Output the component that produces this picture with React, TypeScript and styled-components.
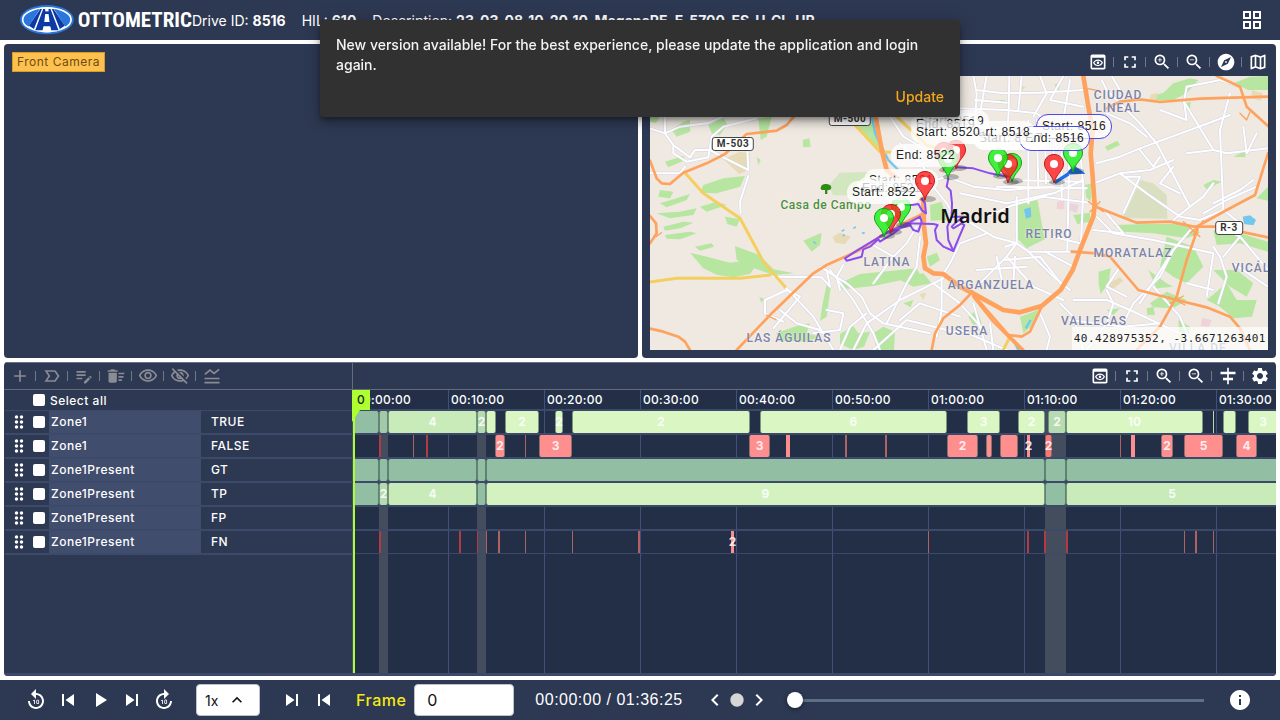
import React from 'react';
import styled, { createGlobalStyle, css } from 'styled-components';
import {
  MdAdd, MdAlignHorizontalCenter, MdCircle, MdDeleteSweep, MdDragIndicator, MdEditNote, MdExpandLess,
  MdExplore, MdForward10, MdFullscreen, MdGridView, MdInfo, MdKeyboardArrowLeft, MdKeyboardArrowRight,
  MdLabelImportantOutline, MdOutlineMap, MdOutlinePreview, MdOutlineVisibility, MdOutlineVisibilityOff,
  MdPlayArrow, MdReplay10, MdSettings, MdSkipNext, MdSkipPrevious, MdZoomIn, MdZoomOut,
} from 'react-icons/md';

const navy = '#2d3852';
const line = '#3d4969';

const GlobalStyle = createGlobalStyle`
  * { box-sizing: border-box; }
  body { margin: 0; background: #fff; color: #fff; font: 400 12px Inter, sans-serif; letter-spacing: 0.5px; }
  button, input, select { font: inherit; letter-spacing: inherit; color: inherit; }
`;

const Page = styled.div`
  display: flex;
  flex-direction: column;
  min-height: 100vh;
`;

const Header = styled.header`
  display: flex;
  align-items: center;
  height: 40px;
  padding: 0 16px 0 20px;
  background: ${navy};
`;

const Brand = styled.a`
  display: flex;
  align-items: center;
  gap: 4px;
  width: 172px;
  color: #fff;
  text-decoration: none;
  letter-spacing: 0;
  font: 700 21px 'Liberation Sans Narrow', 'Roboto Condensed', Roboto, sans-serif;
`;

const Facts = styled.div`
  display: flex;
  flex: 1;
  gap: 16px;
  font-size: 14px;
  letter-spacing: 0;
  white-space: nowrap;
  b { font-weight: 700; }
`;

const IconButton = styled.button<{ $size: number; $dim?: boolean }>`
  display: grid;
  place-items: center;
  width: ${p => p.$size}px;
  height: ${p => p.$size}px;
  padding: 0;
  border: 0;
  background: none;
  color: ${p => (p.$dim ? '#8a8b93' : '#fff')};
  font-size: ${p => p.$size}px;
  cursor: pointer;
`;

const Workspace = styled.main`
  display: grid;
  flex: 1;
  grid-template: minmax(0, 1fr) minmax(0, 1fr) / minmax(0, 1fr) minmax(0, 1fr);
  gap: 4px;
  padding: 4px;
`;

const Panel = styled.section`
  display: flex;
  flex-direction: column;
  padding: 8px;
  border-radius: 4px;
  background: ${navy};
  overflow: hidden;
`;

const CameraTag = styled.span`
  align-self: flex-start;
  padding: 0 4px;
  border: 1px solid #d79a2c;
  background: #ffc14d;
  color: #6b4c14;
  line-height: 18px;
`;

const Tools = styled.div<{ $end?: boolean }>`
  display: flex;
  justify-content: ${p => (p.$end ? 'flex-end' : 'flex-start')};
  height: 24px;
`;

const Tool = styled.div`
  display: flex;
  align-items: center;
  height: 20px;
  & + &::before {
    content: '';
    width: 1px;
    height: 10px;
    margin: 0 6px 0 5px;
    background: #727685;
  }
`;

const MapBox = styled.div`
  position: relative;
  flex: 1;
  min-height: 0;
  overflow: hidden;
  background: #efe9e1;
`;

const MapArt = styled.svg`
  display: block;
  width: 100%;
  height: 100%;
`;

const at = css<{ $x: number; $y: number }>`
  position: absolute;
  left: ${p => p.$x}px;
  top: ${p => p.$y}px;
`;

const Place = styled.span<{ $x: number; $y: number; $green?: boolean }>`
  ${at}
  transform: translate(-50%, -50%);
  color: ${p => (p.$green ? '#4d8f3c' : '#7c82a8')};
  font: 500 12px / 13px Roboto, sans-serif;
  letter-spacing: ${p => (p.$green ? '0.5px' : '1px')};
  text-align: center;
  white-space: pre;
  text-shadow: 0 0 2px #fff;
`;

const City = styled.span<{ $x: number; $y: number }>`
  ${at}
  transform: translate(-50%, -50%);
  color: #111;
  font: 600 20px 'Noto Sans', sans-serif;
  letter-spacing: 0;
`;

const Shield = styled.span<{ $x: number; $y: number }>`
  ${at}
  transform: translate(-50%, -50%);
  padding: 0 4px;
  border: 1px solid #444;
  border-radius: 3px;
  background: #fff;
  color: #333;
  font: 700 10px / 12px Roboto, sans-serif;
  white-space: nowrap;
`;

const Tag = styled.span<{ $x: number; $y: number; $active?: boolean }>`
  ${at}
  height: 25px;
  padding: 0 5px;
  border: 1px solid ${p => (p.$active ? '#4a4af0' : 'transparent')};
  border-radius: 12px;
  background: rgba(255, 255, 255, 0.75);
  background-clip: padding-box;
  color: #222;
  font: 12px / 23px 'Liberation Sans', sans-serif;
  white-space: nowrap;
`;

const PinArt = styled.svg<{ $x: number; $y: number }>`
  ${at}
  width: 26px;
  height: 32px;
`;

const Coordinates = styled.output`
  position: absolute;
  right: 0;
  bottom: 0;
  padding: 0 2px;
  background: rgba(255, 255, 255, 0.7);
  color: #222;
  font: 11px / 23px 'DejaVu Sans Mono', monospace;
`;

const Timeline = styled.section`
  display: grid;
  grid-column: 1 / -1;
  grid-template-columns: 348px minmax(0, 1fr);
  border-radius: 4px;
  background: ${navy};
  overflow: hidden;
`;

const Side = styled.div`
  display: flex;
  flex-direction: column;
  border-top: 1px solid #6b7080;
  border-bottom: 3px solid ${line};
`;

const SideTools = styled(Tools)`
  height: 27px;
  padding: 3px 6px;
  border-bottom: 1px solid #666b7c;
`;

const ViewTools = styled(SideTools)`
  border-left: 1px solid #666b7c;
`;

const Check = styled.input`
  appearance: none;
  width: 12px;
  height: 12px;
  margin: 0;
  border-radius: 2px;
  background: #fff;
  &:checked { background: #6ea8ff; }
`;

const SelectAll = styled.label`
  display: flex;
  align-items: center;
  gap: 5px;
  height: 20px;
  padding-left: 29px;
  font-weight: 500;
`;

const Signals = styled.div`
  border-bottom: 1px solid ${line};
`;

const Signal = styled.label`
  display: grid;
  grid-template-columns: 44px 152px minmax(0, 1fr);
  height: 24px;
  margin-left: 1px;
  border: solid ${line};
  border-width: 1px 0;
  font-weight: 500;
  line-height: 22px;
`;

const Grip = styled.span`
  display: flex;
  align-items: center;
  gap: 4px;
  padding-left: 4px;
  font-size: 20px;
`;

const SignalName = styled.span`
  padding-left: 2px;
  background: #414d6d;
`;

const SignalKind = styled.span`
  padding-left: 10px;
`;

const Chart = styled.div`
  position: relative;
  flex: 1;
  background: linear-gradient(to right, #43517a 1px, transparent 1px) 0 0 / 96px 100%, #222f47;
  overflow: hidden;
`;

const Ruler = styled.div`
  display: flex;
  height: 20px;
  border-bottom: 1px solid ${line};
`;

const Tick = styled.span`
  flex: 0 0 96px;
  padding-left: 3px;
  font-weight: 500;
  line-height: 20px;
  letter-spacing: 0.3px;
  white-space: nowrap;
`;

const Band = styled.div`
  position: absolute;
  top: 20px;
  bottom: 0;
  background: #444d5d;
`;

const Track = styled.div`
  position: relative;
  height: 24px;
  border: solid ${line};
  border-width: 1px 0;
`;

const tones = {
  teal: '#92bea4', sage: '#a3c9ab', mist: '#b7dbb1', leaf: '#c9eab9', mint: '#d4f2bf', lime: '#daf6c2',
  rose: '#ff8f8f', coral: '#ff7575', brick: '#b23a42', clay: '#b06262',
};
type Tone = keyof typeof tones;

const Bar = styled.div<{ $tone: Tone; $thin: boolean }>`
  position: absolute;
  top: 0;
  bottom: 0;
  display: flex;
  justify-content: center;
  border: solid rgba(60, 90, 85, 0.6);
  border-width: ${p => (p.$thin ? '0' : '0 1px')};
  border-radius: ${p => (p.$thin ? 0 : 2)}px;
  background: ${p => tones[p.$tone]};
  color: rgba(255, 255, 255, 0.85);
  font-weight: 700;
  line-height: 22px;
  letter-spacing: 0;
`;

const Playhead = styled.div`
  position: absolute;
  top: 0;
  bottom: 0;
  left: 1px;
  width: 2px;
  background: #adff2f;
`;

const PlayheadFlag = styled.div`
  position: absolute;
  top: 0;
  left: 0;
  width: 18px;
  height: 32px;
  padding-left: 5px;
  background: #adff2f;
  clip-path: polygon(0 0, 100% 0, 100% 20px, 8px 20px, 0 100%);
  color: #222;
  font-weight: 500;
  line-height: 20px;
`;

const Footer = styled.footer`
  display: flex;
  align-items: center;
  height: 40px;
  padding: 0 28px 0 24px;
  background: ${navy};
`;

const Group = styled.div<{ $gap: number; $after: number }>`
  display: flex;
  align-items: center;
  gap: ${p => p.$gap}px;
  margin-right: ${p => p.$after}px;
`;

const Speed = styled.label`
  position: relative;
  margin-right: 20px;
  color: #111;
  svg { position: absolute; right: 13px; top: 6px; font-size: 20px; pointer-events: none; }
`;

const SpeedSelect = styled.select`
  appearance: none;
  width: 64px;
  height: 32px;
  padding: 0 8px;
  border: 1px solid #bfc3cc;
  border-radius: 4px;
  background: #fff;
  font-size: 14px;
  letter-spacing: 0;
`;

const FrameField = styled.label`
  display: flex;
  align-items: center;
  gap: 8px;
  margin-right: 21px;
  color: #f5ea14;
  font-size: 16px;
  font-weight: 500;
`;

const FrameInput = styled.input`
  width: 100px;
  height: 32px;
  padding: 0 12px;
  border: 1px solid #bfc3cc;
  border-radius: 4px;
  background: #fff;
  color: #111;
  font-weight: 400;
`;

const Clock = styled.time`
  margin-right: 20px;
  font: 16px 'Liberation Sans', sans-serif;
  white-space: nowrap;
`;

const Scrub = styled.input`
  appearance: none;
  flex: 1;
  min-width: 0;
  height: 16px;
  margin: 0 24px 0 0;
  background: linear-gradient(#5d7086, #5d7086) center / 100% 3px no-repeat;
  &::-webkit-slider-thumb {
    appearance: none;
    width: 16px;
    height: 16px;
    border-radius: 50%;
    background: #fff;
    box-shadow: 0 1px 4px rgba(0, 0, 0, 0.5);
  }
`;

const Snackbar = styled.div`
  position: fixed;
  top: 20px;
  left: 50%;
  display: flex;
  flex-direction: column;
  width: 640px;
  max-width: 100vw;
  height: 97px;
  padding: 15px 16px 8px;
  transform: translateX(-50%);
  border-radius: 4px;
  background: #313131;
  box-shadow: 0 3px 5px -1px rgba(0, 0, 0, 0.3), 0 6px 10px rgba(0, 0, 0, 0.2), 0 1px 18px rgba(0, 0, 0, 0.2);
  color: #f3f3f3;
  font: 500 14px / 20px Inter, sans-serif;
  letter-spacing: 0;
`;

const UpdateButton = styled.button`
  align-self: flex-end;
  margin-top: auto;
  padding: 0;
  border: 0;
  background: none;
  color: #f2a81d;
  line-height: 24px;
  cursor: pointer;
`;

const Logo = () => (
  <svg width="54" height="30" viewBox="0 0 162 90" aria-hidden="true">
    <ellipse cx="81" cy="44" rx="81" ry="44" fill="#2a76dc" />
    <ellipse cx="81" cy="44" rx="73" ry="36" fill="#2a76dc" stroke="#fff" strokeWidth="5" />
    <path d="M62 8H100L137 66Q112 80 81 80Q50 80 25 66Z" fill="#fff" />
    <path d="M61 12L27 62L42 72L66 12ZM101 12L135 62L120 72L96 12Z" fill="#0b3aa4" />
    <path d="M70 12H92L116 76H94L91 64H71L68 76H46Z" fill="#0b3aa4" />
    <path d="M76 27H86L89 51H73ZM71 67H91L94 82H68Z" fill="#fff" />
    <path d="M76 10H86V19H76Z" fill="#fff" />
  </svg>
);

const TrendIcon = () => (
  <svg width="20" height="20" viewBox="0 0 24 24" fill="none" stroke="currentColor" strokeWidth="2" aria-hidden="true">
    <path d="M3.5 10L9.5 5L14.5 9L20.5 4M3 15H21M3 20H21" />
  </svg>
);

const parks = [
  '150,548 200,560 270,578 330,570 345,590 330,612 280,622 230,614 190,595', '285,528 360,556 400,598 462,610 400,615 330,590 290,570',
  '190,345 250,325 315,318 300,350 230,370 180,368', '205,165 250,145 262,162 240,195 215,190', '60,360 100,365 90,385 55,380',
  '60,400 110,385 150,372 140,390 80,412', '50,430 120,425 170,415 160,435 90,445', '70,470 130,455 160,458 120,475 75,482',
  '75,495 150,485 170,490 120,508 80,506', '180,410 230,395 260,405 200,425', '165,530 215,520 222,530 180,542',
  '95,180 130,155 150,150 150,185 110,200', '75,275 130,258 135,270 85,292', '255,440 300,448 290,470 262,462', '355,145 395,140 380,200 362,210',
  '488,210 508,205 512,230 490,232', '490,512 545,488 540,525 515,545', '350,262 362,270 355,285', '30,140 60,140 48,158 30,156',
  '600,640 660,612 830,595 842,618 700,648 606,658', '560,645 572,650 560,740 540,752 548,700', '358,682 372,686 364,698', '408,790 470,768 510,760 500,790 540,800 500,815 420,812',
  '600,792 640,768 655,790 690,785 672,830 640,840 600,822', '700,790 730,770 765,785 762,840 710,840', '770,625 850,610 875,640 820,650',
  '860,560 890,548 900,570 870,590', '870,405 905,395 920,450 872,452', '790,700 820,690 812,712', '645,160 690,140 720,200 715,235',
  '1130,405 1192,388 1214,508 1160,535 1128,500', '1530,80 1570,68 1600,40 1650,25 1675,30 1640,70 1600,90 1540,92', '1780,40 1830,20 1884,18 1884,60 1825,60',
  '1628,100 1652,95 1650,120', '1080,290 1105,285 1100,300', '1243,45 1262,35 1256,62', '1078,90 1094,90 1094,102 1080,102', '1300,435 1350,428 1352,455 1312,462',
  '1420,465 1520,462 1640,462 1680,488 1640,505 1540,490 1450,485', '1720,480 1800,490 1884,515 1884,545 1800,520 1730,525', '1580,500 1660,530 1690,590 1640,640 1600,620 1560,590',
  '1700,690 1760,640 1790,690 1850,690 1836,740 1780,745 1740,710', '1720,600 1790,600 1840,640 1820,680 1770,650', '1376,605 1412,595 1406,640 1382,672 1376,640', '1530,700 1580,665 1640,690 1600,715 1540,712',
  '1140,740 1195,720 1180,765 1150,790', '1690,345 1720,330 1745,335 1700,358', '1395,230 1432,212 1440,225 1402,242', '1525,600 1580,640 1600,650 1550,655', '1780,260 1820,240 1815,262',
  '1400,720 1440,715 1420,735', '1615,750 1650,770 1645,800 1620,810', '1335,345 1355,340 1352,395 1338,380', '1850,385 1884,350 1884,392', '1520,715 1540,710 1545,735 1522,735', '985,740 1010,720 1025,760 1000,765',
];

const patches: [string, string][] = [
  ['565,348 600,308 690,306 770,352 740,376 580,376', '#d2e6bf'], ['250,268 300,245 330,250 325,300 298,312', '#e6dbb6'],
  ['578,500 600,488 632,500 615,522 585,518', '#e6dbb6'], ['1502,330 1540,340 1580,375 1582,446 1448,444 1470,400', '#d9dfc0'],
  ['1252,395 1272,392 1274,418 1250,418', '#f0d2d8'], ['1290,400 1316,404 1310,428 1286,420', '#ead4dc'], ['1686,745 1715,750 1708,770 1682,768', '#f0d2d8'],
  ['1530,75 1552,68 1550,90 1532,90', '#e6dbb6'], ['1836,60 1868,70 1862,92 1834,84', '#e6dbb6'], ['1404,642 1440,622 1450,632 1415,660', '#e6dbb6'],
  ['838,672 858,668 850,690', '#e6dbb6'], ['1140,45 1156,52 1142,65', '#e6dbb6'],
];

const streets = [
  '75,140 75,190 100,225 150,262 165,240 210,240 250,262', '30,175 75,190 120,170 200,160 250,140', '100,225 100,250 140,275 205,262 215,200 250,170 350,145',
  '325,318 300,395 302,430', '320,195 325,300 250,262', '30,310 120,310 135,290', '400,620 545,622 570,650 560,600', '435,650 520,740 580,840', '375,690 440,660 480,680 400,775',
  '375,690 375,730 430,755', '420,720 470,760 540,780', '540,590 620,640 665,680 690,730 730,760 870,790', '570,600 640,690 700,790 720,840', '610,585 590,620 600,660',
  '640,840 680,760 780,690 910,625', '600,840 630,770 680,730', '740,760 800,640 830,590 840,500', '700,840 800,750 960,790', '780,750 840,700 960,740', '880,640 960,700 1040,790',
  '905,625 905,720 890,800', '910,612 930,580 960,520 1040,490', '560,720 610,730 600,780 520,790', '690,520 760,560 800,520 830,470', '760,560 700,640',
  '780,220 850,290 880,350 920,400 960,470', '750,140 790,200 850,235 960,260', '830,290 900,260 940,300', '860,340 920,320 1000,350 1100,360 1240,350', '960,370 1100,400 1240,370 1330,330',
  '1000,18 1010,70 1005,160', '1040,18 1020,130', '1108,18 1106,120 1100,240', '1145,18 1135,120', '960,115 1100,120 1190,130 1240,170 1250,240', '1010,60 1090,70 1200,68 1330,60',
  '1005,90 1100,98', '1200,18 1220,70 1180,140', '1270,18 1230,90 1330,110', '1290,30 1270,150', '1165,150 1165,400', '1190,150 1195,350', '1215,170 1218,340', '1240,220 1243,330',
  '1265,250 1265,390', '1288,250 1282,540', '1320,230 1330,360 1322,540', '1070,350 1340,355', '1110,330 1330,335', '1040,440 1120,405 1210,380 1360,400', '1130,380 1130,520 1165,545 1310,545',
  '1095,530 1130,520 1060,500 960,440', '1130,520 1100,560 1010,650', '1095,570 1200,560 1270,650', '1100,560 1180,650 1270,690', '1010,600 1160,590', '1070,560 1090,650', '1125,560 1120,640',
  '1165,545 1240,620 1290,660', '1215,545 1300,590', '1240,500 1320,520', '1360,340 1440,310 1530,300 1600,270', '1370,280 1440,260 1500,235 1690,165 1770,135', '1385,30 1400,60 1500,160 1550,220 1650,410',
  '1400,130 1470,160 1520,200', '1440,310 1520,370 1620,440', '1460,320 1500,320 1450,430', '1370,440 1420,490 1540,510 1720,550', '1360,480 1450,490 1400,430', '1415,18 1440,60',
  '1632,95 1640,50 1740,30 1800,50', '1632,95 1720,240 1760,250 1884,235', '1640,250 1720,240', '1770,70 1740,180 1750,420 1800,460', '1810,170 1820,250 1850,190', '1720,400 1800,360 1840,330',
  '1690,430 1760,390 1850,350', '1620,440 1680,450 1750,420', '1720,340 1690,380 1650,410 1600,450', '1660,470 1600,540 1500,700', '1600,540 1560,620 1480,700 1450,760', '1720,530 1740,560 1760,620 1735,700',
  '1720,550 1700,680', '1800,500 1884,600', '1750,560 1800,500 1760,480', '1780,580 1884,650', '1640,640 1720,660', '1540,650 1620,740 1660,840', '1260,700 1300,740 1330,840', '1300,690 1400,690 1470,720 1640,800',
  '1290,750 1450,770 1560,760', '1400,660 1420,700 1400,760 1340,840', '1200,730 1230,800 1220,840', '1440,590 1400,650 1460,680', '1000,700 1040,840', '1050,760 1060,840', '960,780 1100,840', '1560,120 1640,150 1632,95',
  '1500,240 1540,290 1560,260', '1600,290 1560,340 1620,370',
];

const highways = [
  '30,272 50,325 65,340 90,342 130,308 200,280 255,252 320,192 410,182 440,165 470,130', '30,438 48,460 50,490 30,520', '30,776 70,785 115,800 135,815 150,840',
  '290,840 400,725 520,610 560,585 660,540 720,500 800,455 850,430', '1400,115 1440,95 1500,88 1560,96 1680,86 1884,80', '1730,18 1800,50 1820,110 1884,168',
  '1884,250 1845,375 1760,420 1670,470', '1362,408 1430,435 1490,458 1590,455 1660,470 1730,470 1884,502', '1295,545 1370,550 1410,560 1495,660 1610,690 1700,712 1770,740 1800,775 1830,840',
  '1672,480 1640,570 1610,680 1560,770 1490,840', '875,840 885,790 910,745 960,705 995,668', '995,668 1110,800 1150,840', '1205,710 1170,785 1145,800 1105,795', '1000,680 1060,755 1145,840',
];

const ringRoads = [
  '705,130 725,240 740,300 800,350 850,390 852,470 858,520 850,560 855,595 880,610 910,612 960,650 995,668',
  '1330,18 1345,110 1358,180 1352,250 1358,320 1364,405 1360,440 1322,535 1298,600 1262,660 1205,708 1140,727 1090,720 995,668',
];

const arterials = ['135,308 190,370 300,445 330,500 370,575 435,650', '30,636 110,625 300,625 390,615', '645,165 720,245 750,247', '770,140 860,225 940,250', '1090,840 1110,800'];

const routes = [
  '615,565 650,542 720,500 745,485 800,462 840,440 845,455 835,485 820,480 810,465 780,475 760,490 720,515 715,508 690,530 670,538 665,560 620,572 615,565',
  '750,488 800,460 880,462 893,465 885,480 890,510 910,530 940,543 960,495 973,465 965,460 940,475 935,470 950,455 975,440 935,440',
  '925,325 920,350 932,362 936,400 935,440 922,470 925,510 940,543', '770,405 815,405 835,402 845,420 858,430 855,400 845,385', '950,292 1000,295 1050,310 1110,322',
];

const CityMap = () => (
  <MapArt viewBox="30 18 1854 822" preserveAspectRatio="xMinYMin slice" role="img" aria-label="Map of Madrid">
    {parks.map(p => <polygon key={p} points={p} fill="#b6e6a0" />)}
    {patches.map(([p, fill]) => <polygon key={p} points={p} fill={fill} />)}
    <path d="M1152 418L1172 412L1174 440L1158 446ZM1808 440L1830 436L1848 450L1840 466L1812 462Z" fill="#72c7ee" />
    <path d="M695 135L705 190L745 270L775 300M1120 810L1135 840M1157 775L1172 750" fill="none" stroke="#72c7ee" strokeWidth="7" />
    <path d="M605 484l8-5M640 475l8-4M608 498l6-4M666 490l8-2M520 515l8 6" stroke="#72c7ee" strokeWidth="5" />
    <g fill="none" strokeLinejoin="round" strokeLinecap="round">
      {streets.map(p => <polyline key={p} points={p} stroke="#d3d4e6" strokeWidth="9" />)}
      {streets.map(p => <polyline key={p} points={p} stroke="#fff" strokeWidth="6" />)}
      {arterials.map(p => <polyline key={p} points={p} stroke="#f4cf60" strokeWidth="9" />)}
      {highways.map(p => <polyline key={p} points={p} stroke="#ffa25e" strokeWidth="8" />)}
      {ringRoads.map(p => <polyline key={p} points={p} stroke="#ffa25e" strokeWidth="14" />)}
      <path d="M1630 455L1680 500M1650 490L1700 450M1690 452L1660 495M1800 130l20 20l10-25M1340 55l40 8M1345 395l45 30M1350 425l30-30M1585 680l50 25M1590 700l40-22M380 735l28 14M48 500l16-12" stroke="#ffa25e" strokeWidth="4" />
      {routes.map(p => <polyline key={p} points={p} stroke="#8b4df0" strokeWidth="6" />)}
    </g>
    <path d="M1244 338L1285 312" stroke="#1f6fe5" strokeWidth="10" />
    <path d="M1276 314L1302 286L1337 311Z" fill="#1f6fe5" />
    <path d="M555 372V360Q538 362 543 350Q546 340 560 342Q574 344 574 354Q572 362 562 360V372Z" fill="#2e8b15" />
  </MapArt>
);

const Pin = ({ x, y, color }: { x: number; y: number; color: 'red' | 'green' }) => (
  <PinArt $x={x - 660} $y={y - 105} viewBox="0 0 26 32" aria-hidden="true">
    <ellipse cx="13" cy="28" rx="8" ry="3" fill="#222" opacity="0.3" />
    <path
      d="M10 0.5C4.5 0.5 0.5 4.5 0.5 10C0.5 16.5 8 20 10 29C12 20 19.5 16.5 19.5 10C19.5 4.5 15.5 0.5 10 0.5Z"
      fill={color === 'red' ? '#ff2222' : '#1bf01b'}
      fillOpacity="0.82"
      stroke={color === 'red' ? '#b91c1c' : '#16a016'}
      strokeWidth="1"
    />
    <circle cx="10" cy="10" r="4" fill="#fff" />
  </PinArt>
);

const pins: [number, number, 'red' | 'green'][] = [
  [956, 169, 'red'], [944, 171, 'red'], [948, 178, 'green'], [1012, 182, 'green'], [1008, 183, 'red'], [998, 177, 'green'],
  [1073, 172, 'green'], [1054, 183, 'red'], [901, 226, 'green'], [891, 233, 'red'], [884, 237, 'green'],
];

const tags: [string, number, number, boolean?][] = [
  ['Start: 8516', 1036, 127, true], ['End: 8517', 972, 139], ['Start: 8517', 973, 139], ['End: 8516', 1019, 139, true], ['Start: 8518', 960, 133],
  ['Start: 8519', 914, 122], ['End: 8519', 910, 125], ['Start: 8520', 910, 133], ['Start: 8521', 863, 181], ['End: 8521', 856, 189],
  ['End: 8522', 890, 156], ['Start: 8522', 846, 193],
];

const places: [string, number, number][] = [
  ['CIUDAD\nLINEAL', 1118, 102], ['RETIRO', 1049, 234], ['MORATALAZ', 1133, 253], ['VICÁLVARO', 1268, 268], ['VALLECAS', 1094, 321],
  ['ARGANZUELA', 991, 285], ['USERA', 967, 331], ['LATINA', 887, 262], ['LAS ÁGUILAS', 789, 338], ['VILLA DE', 1198, 348],
];

const tools = (items: [string, React.ReactNode][], dim = false) =>
  items.map(([label, icon]) => (
    <Tool key={label}>
      <IconButton $size={20} $dim={dim} aria-label={label}>{icon}</IconButton>
    </Tool>
  ));

type Segment = [start: number, width: number, tone: Tone, label?: string];

/* Segment positions are in pixels from the start of the recording at the default zoom (96px per ten minutes). */
const signals: { name: string; kind: string; segments: Segment[] }[] = [
  {
    name: 'Zone1', kind: 'TRUE', segments: [
      [1, 26, 'teal'], [27, 9, 'sage'], [36, 89, 'leaf', '4'], [125, 9, 'mist', '2'], [134, 10, 'lime'], [153, 34, 'lime', '2'], [203, 8, 'lime', '2'],
      [220, 178, 'lime', '2'], [408, 187, 'lime', '6'], [615, 33, 'lime', '3'], [666, 27, 'lime', '2'], [696, 18, 'mist', '2'], [714, 137, 'lime', '10'],
      [861, 1, 'mist'], [871, 13, 'lime'], [896, 30, 'lime', '3'],
    ],
  },
  {
    name: 'Zone1', kind: 'FALSE', segments: [
      [27, 2, 'brick'], [61, 1, 'clay'], [74, 2, 'brick'], [143, 10, 'rose', '2'], [173, 1, 'clay'], [187, 33, 'rose', '3'], [397, 21, 'rose', '3'],
      [434, 4, 'rose'], [493, 2, 'clay'], [533, 2, 'clay'], [595, 31, 'rose', '2'], [634, 6, 'rose'], [648, 18, 'rose'], [675, 3, 'rose', '2'],
      [693, 7, 'coral', '2'], [768, 1, 'clay'], [779, 4, 'rose'], [809, 12, 'rose', '2'], [832, 39, 'rose', '5'], [884, 21, 'rose', '4'],
    ],
  },
  {
    name: 'Zone1Present', kind: 'GT', segments: [
      [1, 26, 'teal'], [27, 9, 'teal'], [36, 89, 'teal'], [125, 9, 'teal'], [134, 559, 'teal'], [693, 21, 'teal'], [714, 212, 'teal'],
    ],
  },
  {
    name: 'Zone1Present', kind: 'TP', segments: [
      [1, 26, 'teal'], [27, 9, 'mist', '2'], [36, 89, 'leaf', '4'], [125, 9, 'teal'], [134, 559, 'mint', '9'], [693, 21, 'teal'], [714, 212, 'leaf', '5'],
    ],
  },
  { name: 'Zone1Present', kind: 'FP', segments: [] },
  {
    name: 'Zone1Present', kind: 'FN', segments: [
      [27, 2, 'brick'], [107, 2, 'brick'], [125, 1, 'brick'], [134, 1, 'clay'], [146, 2, 'clay'], [173, 1, 'clay'], [220, 1, 'clay'], [286, 2, 'clay'],
      [379, 3, 'rose', '2'], [576, 1, 'clay'], [675, 2, 'brick'], [692, 2, 'brick'], [714, 2, 'brick'], [832, 1, 'clay'], [843, 2, 'clay'], [861, 1, 'clay'],
    ],
  },
];

const bands = [[27, 9], [125, 9], [693, 21]];

const ticks = Array.from({ length: 10 }, (_, i) => `0${Math.floor(i / 6)}:${i % 6}0:00`);

export default function App() {
  return (
    <Page>
      <GlobalStyle />
      <Header>
        <Brand href="#"><Logo />OTTOMETRIC</Brand>
        <Facts>
          <span>Drive ID: <b>8516</b></span>
          <span>HIL: <b>610</b></span>
          <span>Description: <b>23_03_08_10_20_10_MeganeRE_E_5700_ES_U_CL_UR</b></span>
        </Facts>
        <IconButton $size={24} aria-label="Layouts"><MdGridView /></IconButton>
      </Header>

      <Workspace>
        <Panel>
          <CameraTag>Front Camera</CameraTag>
        </Panel>

        <Panel>
          <Tools $end>
            {tools([
              ['Preview map', <MdOutlinePreview />], ['Full screen map', <MdFullscreen />], ['Zoom in map', <MdZoomIn />],
              ['Zoom out map', <MdZoomOut />], ['Follow vehicle', <MdExplore />], ['Map style', <MdOutlineMap />],
            ])}
          </Tools>
          <MapBox>
            <CityMap />
            {places.map(([name, x, y]) => <Place key={name} $x={x - 650} $y={y - 76}>{name}</Place>)}
            <Place $x={176} $y={129} $green>Casa de Campo</Place>
            <City $x={325} $y={139}>Madrid</City>
            <Shield $x={83} $y={68}>M-503</Shield>
            <Shield $x={200} $y={43}>M-500</Shield>
            <Shield $x={579} $y={152}>R-3</Shield>
            {pins.map(([x, y, color]) => <Pin key={`${x}-${y}`} x={x} y={y} color={color} />)}
            {tags.map(([text, x, y, active]) => (
              <Tag key={text} $x={x - 650} $y={y - 89} $active={active}>{text}</Tag>
            ))}
            <Pin x={925} y={200} color="red" />
            <Coordinates>40.428975352, -3.6671263401</Coordinates>
          </MapBox>
        </Panel>

        <Timeline>
          <Side>
            <SideTools>
              {tools([
                ['Add', <MdAdd />], ['Label', <MdLabelImportantOutline />], ['Edit', <MdEditNote />], ['Delete', <MdDeleteSweep />],
                ['Show', <MdOutlineVisibility />], ['Hide', <MdOutlineVisibilityOff />], ['Compare', <TrendIcon />],
              ], true)}
            </SideTools>
            <SelectAll><Check type="checkbox" />Select all</SelectAll>
            <Signals>
              {signals.map(s => (
                <Signal key={s.kind}>
                  <Grip><MdDragIndicator /><Check type="checkbox" /></Grip>
                  <SignalName>{s.name}</SignalName>
                  <SignalKind>{s.kind}</SignalKind>
                </Signal>
              ))}
            </Signals>
          </Side>

          <Side>
            <ViewTools $end>
              {tools([
                ['Preview timeline', <MdOutlinePreview />], ['Full screen timeline', <MdFullscreen />], ['Zoom in timeline', <MdZoomIn />],
                ['Zoom out timeline', <MdZoomOut />], ['Center playhead', <MdAlignHorizontalCenter />], ['Settings', <MdSettings />],
              ])}
            </ViewTools>
            <Chart>
              <Ruler>{ticks.map(t => <Tick key={t}>{t}</Tick>)}</Ruler>
              {bands.map(([left, width]) => <Band key={left} style={{ left, width }} />)}
              {signals.map(s => (
                <Track key={s.kind}>
                  {s.segments.map(([left, width, tone, label]) => (
                    <Bar key={left} $tone={tone} $thin={width < 5} style={{ left, width }}>{label}</Bar>
                  ))}
                </Track>
              ))}
              <Playhead />
              <PlayheadFlag>0</PlayheadFlag>
            </Chart>
          </Side>
        </Timeline>
      </Workspace>

      <Footer>
        <Group $gap={8} $after={20}>
          <IconButton $size={24} aria-label="Back 10 seconds"><MdReplay10 /></IconButton>
          <IconButton $size={24} aria-label="Previous frame"><MdSkipPrevious /></IconButton>
          <IconButton $size={24} aria-label="Play"><MdPlayArrow /></IconButton>
          <IconButton $size={24} aria-label="Next frame"><MdSkipNext /></IconButton>
          <IconButton $size={24} aria-label="Forward 10 seconds"><MdForward10 /></IconButton>
        </Group>
        <Speed>
          <SpeedSelect aria-label="Playback speed" defaultValue="1x">
            <option>1x</option>
            <option>2x</option>
          </SpeedSelect>
          <MdExpandLess />
        </Speed>
        <Group $gap={8} $after={20}>
          <IconButton $size={24} aria-label="Next event"><MdSkipNext /></IconButton>
          <IconButton $size={24} aria-label="Previous event"><MdSkipPrevious /></IconButton>
        </Group>
        <FrameField>
          Frame
          <FrameInput defaultValue="0" />
        </FrameField>
        <Clock>00:00:00 / 01:36:25</Clock>
        <Group $gap={2} $after={16}>
          <IconButton $size={24} aria-label="Step back"><MdKeyboardArrowLeft /></IconButton>
          <IconButton $size={16} aria-label="Step marker"><MdCircle color="#d6d6d6" /></IconButton>
          <IconButton $size={24} aria-label="Step forward"><MdKeyboardArrowRight /></IconButton>
        </Group>
        <Scrub type="range" min={0} max={5785} defaultValue={0} aria-label="Position" />
        <IconButton $size={24} aria-label="Information"><MdInfo /></IconButton>
      </Footer>

      <Snackbar role="alert">
        New version available! For the best experience, please update the application and login again.
        <UpdateButton>Update</UpdateButton>
      </Snackbar>
    </Page>
  );
}
